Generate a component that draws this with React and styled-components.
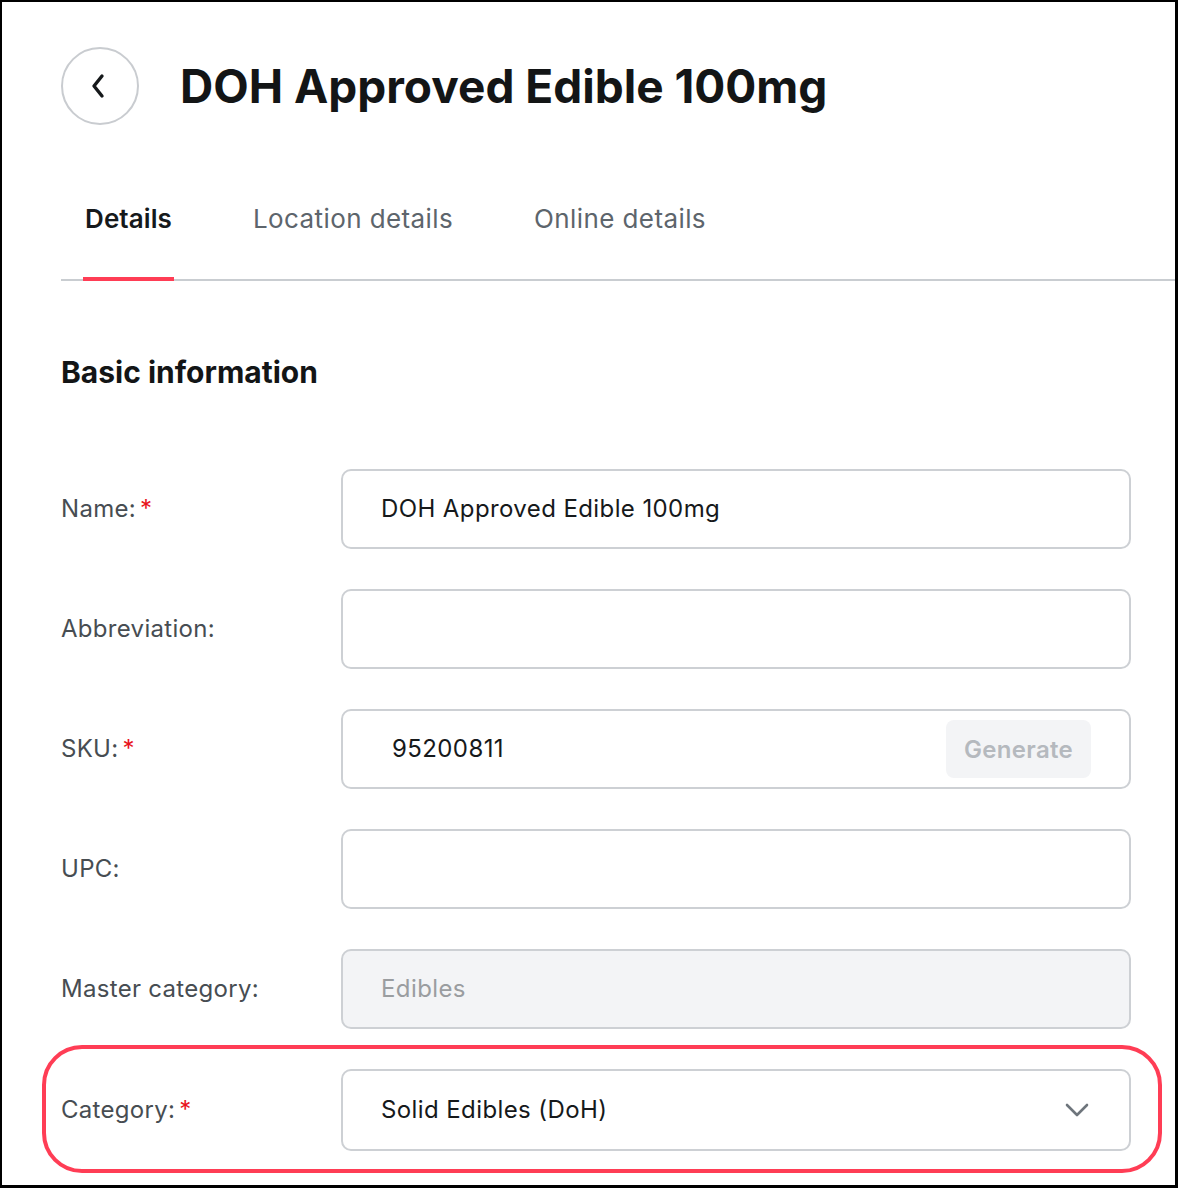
import React from 'react';
import styled, { createGlobalStyle } from 'styled-components';

const GlobalStyle = createGlobalStyle`
  html, body {
    margin: 0;
    padding: 0;
    background: #fff;
  }
  body {
    font-family: Inter, "Noto Sans", "Liberation Sans", sans-serif;
    color: #171a1c;
  }
`

const Frame = styled.div`
  box-sizing: border-box;
  width: 1178px;
  height: 1188px;
  overflow: hidden;
  border-style: solid;
  border-color: #000;
  border-width: 2px 3px 3px 2px;
  background: #fff;
`

const Header = styled.div`
  display: flex;
  align-items: center;
  gap: 41px;
  padding: 45px 0 0 59px;
`

const BackButton = styled.button`
  box-sizing: border-box;
  width: 78px;
  height: 78px;
  border-radius: 50%;
  border: 2px solid #c9ccd0;
  background: #fff;
  display: flex;
  align-items: center;
  justify-content: center;
  padding: 0 4px 0 0;
  cursor: pointer;
`

const Title = styled.h1`
  margin: 0;
  font-size: 46px;
  line-height: 52px;
  font-weight: 700;
  color: #131516;
`

const TabBar = styled.div`
  display: flex;
  gap: 77px;
  margin: 78px 0 0 59px;
  padding-left: 22px;
  border-bottom: 2px solid #c9cdd1;
`

const Tab = styled.div`
  position: relative;
  padding: 0 2px 44px;
  font-size: 26px;
  line-height: 32px;
  letter-spacing: ${p => (p.active ? 0.1 : 0.4)}px;
  font-weight: ${p => (p.active ? 600 : 400)};
  color: ${p => (p.active ? '#16191b' : '#5d656c')};
  &::after {
    content: '';
    display: ${p => (p.active ? 'block' : 'none')};
    position: absolute;
    left: 0;
    right: 0;
    bottom: -2px;
    height: 4px;
    background: #ff3d55;
  }
`

const Body = styled.div`
  padding: 73px 44px 0 59px;
`

const SectionTitle = styled.h2`
  margin: 0 0 79px;
  font-size: 30px;
  line-height: 36px;
  font-weight: 700;
  color: #131516;
`

const Form = styled.div`
  display: flex;
  flex-direction: column;
  gap: 40px;
`

const Row = styled.div`
  display: grid;
  grid-template-columns: 280px 1fr;
  align-items: center;
`

const Highlight = styled.div`
  margin: -24px -31px 0 -19px;
  padding: 20px 27px 18px 15px;
  border: 4px solid #ff3d55;
  border-radius: 40px;
`

const Label = styled.label`
  font-size: 24px;
  line-height: 32px;
  letter-spacing: 0.3px;
  color: #474d52;
`

const Required = styled.span`
  color: #e8141c;
  margin-left: 4px;
`

const Field = styled.div`
  box-sizing: border-box;
  height: ${p => (p.tall ? 82 : 80)}px;
  display: flex;
  align-items: center;
  padding: 0 ${p => (p.select ? 40 : 38)}px 0 ${p => p.indent || 38}px;
  border: 2px solid #cdd0d4;
  border-radius: 10px;
  background: ${p => (p.disabled ? '#f3f4f6' : '#fff')};
  font-size: 24px;
  line-height: 32px;
  letter-spacing: 0.4px;
  color: ${p => (p.disabled ? '#9a9da0' : '#16191b')};
`

const Value = styled.span`
  flex: 1;
`

const GenerateButton = styled.button`
  height: 58px;
  padding: 0 18px;
  border: none;
  border-radius: 8px;
  background: #f3f4f6;
  font-family: inherit;
  font-size: 24px;
  font-weight: 600;
  letter-spacing: 0.3px;
  color: #b5b9be;
`

const Chevron = ({ d, w, h, color, sw }) => (
  <svg width={w} height={h} viewBox={`0 0 ${w} ${h}`} fill="none">
    <path d={d} stroke={color} strokeWidth={sw} strokeLinecap="round" strokeLinejoin="round" />
  </svg>
)

const App = () => (
  <Frame>
    <GlobalStyle />
    <Header>
      <BackButton aria-label="back">
        <Chevron d="M11 3 L3 13 L11 23" w={14} h={26} color="#16191b" sw={3.4} />
      </BackButton>
      <Title>DOH Approved Edible 100mg</Title>
    </Header>
    <TabBar>
      <Tab active>Details</Tab>
      <Tab>Location details</Tab>
      <Tab>Online details</Tab>
    </TabBar>
    <Body>
      <SectionTitle>Basic information</SectionTitle>
      <Form>
        <Row>
          <Label>Name:<Required>*</Required></Label>
          <Field><Value>DOH Approved Edible 100mg</Value></Field>
        </Row>
        <Row>
          <Label>Abbreviation:</Label>
          <Field />
        </Row>
        <Row>
          <Label>SKU:<Required>*</Required></Label>
          <Field indent={49}>
            <Value>95200811</Value>
            <GenerateButton>Generate</GenerateButton>
          </Field>
        </Row>
        <Row>
          <Label>UPC:</Label>
          <Field />
        </Row>
        <Row>
          <Label>Master category:</Label>
          <Field disabled><Value>Edibles</Value></Field>
        </Row>
        <Highlight>
          <Row>
            <Label>Category:<Required>*</Required></Label>
            <Field tall select>
              <Value>Solid Edibles (DoH)</Value>
              <Chevron d="M2 2 L12 12 L22 2" w={24} h={14} color="#6e757c" sw={2.6} />
            </Field>
          </Row>
        </Highlight>
      </Form>
    </Body>
  </Frame>
)

export default App
